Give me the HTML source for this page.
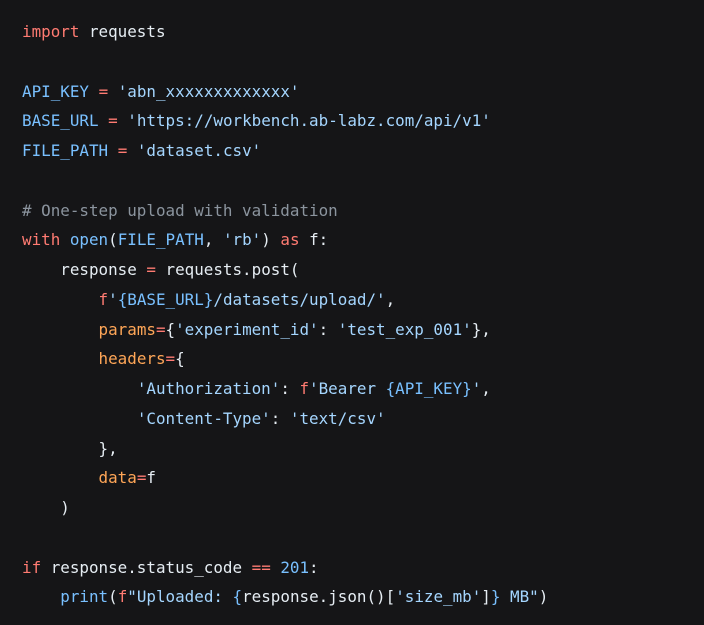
<!DOCTYPE html>
<html><head><meta charset="utf-8"><style>
html,body{margin:0;padding:0;background:#151517;width:704px;height:625px;overflow:hidden}
pre{margin:0;padding:17px 0 0 22px;font-family:"DejaVu Sans Mono","Liberation Mono",monospace;font-size:15.9px;line-height:29.75px;color:#e6edf3;white-space:pre}
.k{color:#ff7b72}.s{color:#a5d6ff}.c{color:#79c0ff}.m{color:#8b949e}.o{color:#ffa657}
</style></head><body><pre><span class="k">import</span> requests

<span class="c">API_KEY</span> <span class="k">=</span> <span class="s">'abn_xxxxxxxxxxxxx'</span>
<span class="c">BASE_URL</span> <span class="k">=</span> <span class="s">'https://workbench.ab-labz.com/api/v1'</span>
<span class="c">FILE_PATH</span> <span class="k">=</span> <span class="s">'dataset.csv'</span>

<span class="m"># One-step upload with validation</span>
<span class="k">with</span> <span class="c">open</span>(<span class="c">FILE_PATH</span>, <span class="s">'rb'</span>) <span class="k">as</span> f:
    response <span class="k">=</span> requests.post(
        <span class="k">f</span><span class="s">'</span><span class="c">{BASE_URL}</span><span class="s">/datasets/upload/'</span>,
        <span class="o">params</span><span class="k">=</span>{<span class="s">'experiment_id'</span>: <span class="s">'test_exp_001'</span>},
        <span class="o">headers</span><span class="k">=</span>{
            <span class="s">'Authorization'</span>: <span class="k">f</span><span class="s">'Bearer </span><span class="c">{API_KEY}</span><span class="s">'</span>,
            <span class="s">'Content-Type'</span>: <span class="s">'text/csv'</span>
        },
        <span class="o">data</span><span class="k">=</span>f
    )

<span class="k">if</span> response.status_code <span class="k">==</span> <span class="c">201</span>:
    <span class="c">print</span>(<span class="k">f</span><span class="s">"Uploaded: </span><span class="c">{</span>response.json()[<span class="s">'size_mb'</span>]<span class="c">}</span><span class="s"> MB"</span>)
</pre></body></html>
